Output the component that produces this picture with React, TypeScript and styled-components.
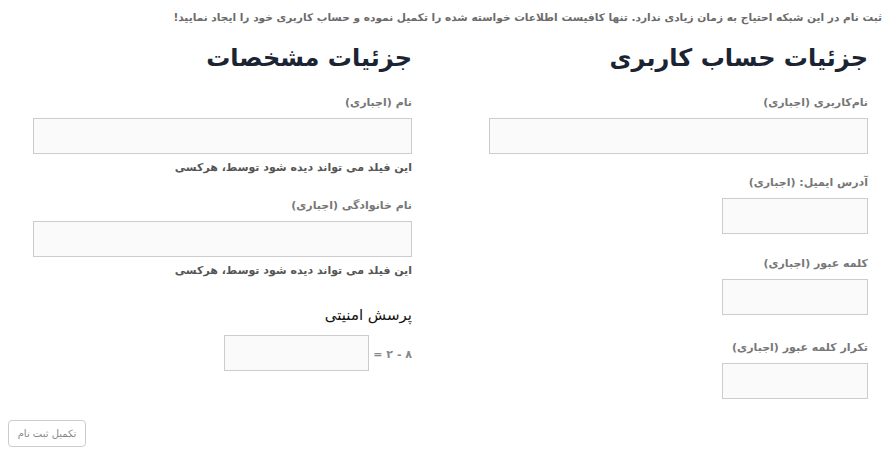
import React from "react";
import styled, { createGlobalStyle } from "styled-components";

const Global = createGlobalStyle`
  html, body { margin: 0; padding: 0; background: #fff; }
  body { font-family: "DejaVu Sans", "Noto Sans", sans-serif; direction: rtl; }
  * { box-sizing: border-box; }
`;

const Page = styled.div`
  width: 888px;
  height: 465px;
  padding: 9px 6px 0 8px;
  direction: rtl;
`;

const Intro = styled.p`
  margin: 0;
  font-size: 10.6px;
  font-weight: bold;
  color: #6b6b6b;
  line-height: 16px;
`;

const Columns = styled.div`
  display: flex;
  gap: 77px;
  padding: 0 14px 0 0;
  margin-top: 16px;
`;

const Column = styled.div`
  width: 379px;
  display: flex;
  flex-direction: column;
  align-items: flex-start;
`;

const Heading = styled.h2`
  margin: 0 0 20px;
  font-size: 24px;
  line-height: 34px;
  font-weight: bold;
  color: #1b2433;
`;

const Label = styled.label<{ $top?: number }>`
  display: block;
  margin-top: ${(p) => p.$top ?? 0}px;
  font-size: 11px;
  font-weight: bold;
  color: #777;
  line-height: 16px;
  margin-bottom: 7px;
`;

const Input = styled.input<{ $w?: number }>`
  display: block;
  width: ${(p) => (p.$w ? `${p.$w}px` : "100%")};
  height: 36px;
  border: 1px solid #ccc;
  background: #fafafa;
  font-family: inherit;
  margin: 0;
`;

const Help = styled.div`
  margin-top: 6px;
  font-size: 11px;
  font-weight: bold;
  color: #555;
  line-height: 16px;
`;

const SubHeading = styled.h3`
  margin: 25px 0 9px;
  font-size: 15px;
  font-weight: normal;
  color: #111;
  line-height: 22px;
`;

const CaptchaRow = styled.div`
  display: flex;
  align-items: center;
  gap: 4px;
`;

const CaptchaText = styled.span`
  font-size: 11px;
  color: #888;
  font-weight: bold;
  margin-top: 2px;
`;

const Footer = styled.div`
  display: flex;
  justify-content: flex-end;
  margin-top: 21px;
`;

const Submit = styled.button`
  width: 78px;
  height: 27px;
  border: 1px solid #ccc;
  border-radius: 4px;
  background: #fff;
  color: #888;
  font-family: inherit;
  font-size: 10px;
  padding: 0;
`;

export default function App() {
  return (
    <>
      <Global />
      <Page>
        <Intro>
          ثبت نام در این شبکه احتیاج به زمان زیادی ندارد. تنها کافیست اطلاعات خواسته شده را تکمیل نموده و حساب کاربری خود را ایجاد نمایید!
        </Intro>
        <Columns>
          <Column>
            <Heading>جزئیات حساب کاربری</Heading>
            <Label>نام‌کاربری (اجباری)</Label>
            <Input />
            <Label $top={21}>آدرس ایمیل: (اجباری)</Label>
            <Input $w={146} />
            <Label $top={22}>کلمه عبور (اجباری)</Label>
            <Input $w={146} />
            <Label $top={25}>تکرار کلمه عبور (اجباری)</Label>
            <Input $w={146} />
          </Column>
          <Column>
            <Heading>جزئیات مشخصات</Heading>
            <Label>نام (اجباری)</Label>
            <Input />
            <Help>این فیلد می تواند دیده شود توسط، هرکسی</Help>
            <Label $top={22}>نام خانوادگی (اجباری)</Label>
            <Input />
            <Help>این فیلد می تواند دیده شود توسط، هرکسی</Help>
            <SubHeading>پرسش امنیتی</SubHeading>
            <CaptchaRow>
              <CaptchaText>۸ - ۲ =</CaptchaText>
              <Input $w={145} />
            </CaptchaRow>
          </Column>
        </Columns>
        <Footer>
          <Submit>تکمیل ثبت نام</Submit>
        </Footer>
      </Page>
    </>
  );
}
